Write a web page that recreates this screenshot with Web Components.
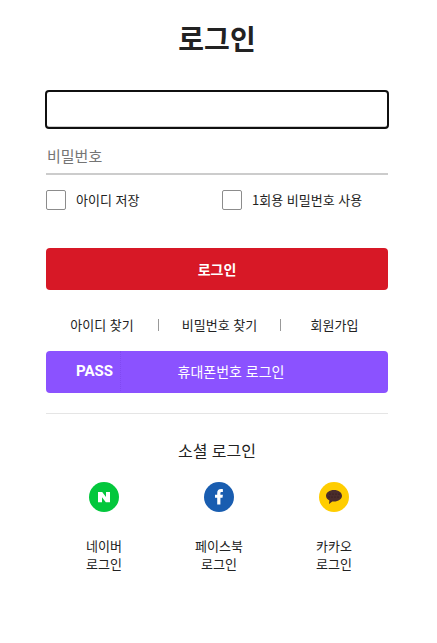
<!DOCTYPE html>
<html lang="ko">
<head>
<meta charset="utf-8">
<meta name="viewport" content="width=device-width, initial-scale=1">
<title>로그인</title>
<style>
  body {
    margin: 0;
    background: #fff;
    color: #222;
    font-family: "Noto Sans CJK KR", sans-serif;
  }
</style>
</head>
<body>
<login-page></login-page>

<script>
class LoginField extends HTMLElement {
  connectedCallback() {
    const label = this.getAttribute("label");
    this.attachShadow({ mode: "open" });
    this.shadowRoot.innerHTML = `
      <style>
        :host {
          display: block;
        }

        input {
          display: block;
          box-sizing: border-box;
          width: 100%;
          height: 37px;
          padding: 0 1px;
          border: 0;
          border-bottom: 2px solid #ccc;
          background: #fff;
          color: inherit;
          font: 15px "Noto Sans CJK KR", sans-serif;
          outline: none;
        }

        input::placeholder {
          color: #757575;
        }

        input:focus,
        :host([active]) input {
          border-radius: 3px;
          outline: 2px solid #101010;
          outline-offset: -1px;
        }
      </style>
      <input
        type="${this.getAttribute("type") || "text"}"
        aria-label="${label}"
        placeholder="${this.hasAttribute("active") ? "" : label}"
      >
    `;
  }
}

class LoginCheck extends HTMLElement {
  connectedCallback() {
    this.attachShadow({ mode: "open" });
    this.shadowRoot.innerHTML = `
      <style>
        :host {
          display: block;
        }

        label {
          display: flex;
          align-items: center;
          gap: 10px;
          font-size: 13px;
          line-height: 20px;
          white-space: nowrap;
        }

        input {
          appearance: none;
          flex: none;
          box-sizing: border-box;
          width: 20px;
          height: 20px;
          margin: 0;
          border: 1px solid #8c8c8c;
          border-radius: 2px;
          background: #fff;
        }

        input:checked {
          background: #d71826;
        }
      </style>
      <label><input type="checkbox"><slot></slot></label>
    `;
  }
}

class LoginButton extends HTMLElement {
  connectedCallback() {
    this.attachShadow({ mode: "open" });
    this.shadowRoot.innerHTML = `
      <style>
        :host {
          display: block;
          --button-color: #d71826;
          --button-weight: 700;
          --button-padding: 0 30px;
        }

        :host([kind="pass"]) {
          --button-color: #8b52ff;
          --button-weight: 400;
          --button-padding: 0 2px 2px 30px;
        }

        button {
          display: grid;
          grid-template-columns: 1fr auto 1fr;
          align-items: center;
          width: 100%;
          height: 42px;
          padding: var(--button-padding);
          border: 0;
          border-radius: 4px;
          background: var(--button-color);
          color: #fff;
          font: var(--button-weight) 14px "Noto Sans CJK KR", sans-serif;
          cursor: pointer;
        }

        .label {
          grid-column: 2;
        }

        ::slotted([slot="brand"]) {
          grid-column: 1;
          justify-self: start;
          padding-right: 7px;
          border-right: 1px dotted #8149f2;
          font: 700 15px/40px Roboto, sans-serif;
        }
      </style>
      <button type="button">
        <slot name="brand"></slot>
        <span class="label"><slot></slot></span>
      </button>
    `;
  }
}

class LoginLinks extends HTMLElement {
  connectedCallback() {
    this.attachShadow({ mode: "open" });
    this.shadowRoot.innerHTML = `
      <style>
        :host {
          display: grid;
          grid-template-columns: 56fr 61fr 54fr;
          align-items: center;
        }

        ::slotted(a) {
          color: inherit;
          font-size: 13px;
          line-height: 12px;
          text-align: center;
          text-decoration: none;
          white-space: nowrap;
        }

        ::slotted(a:not(:first-child)) {
          border-left: 1px solid #999;
        }
      </style>
      <slot></slot>
    `;
  }
}

const icons = {
  naver: `
    <circle cx="15" cy="15" r="15" fill="#03c73c"/>
    <path d="M9 10h4.200l3.800 5V10h4v10.300h-4.200L13 15.300v5H9z" fill="#fff"/>`,
  facebook: `
    <circle cx="15" cy="15" r="15" fill="#195db0"/>
    <path d="M13.200 22.500v-6.700H11v-3h2.200v-1.700c0-2.700 1.300-4 3.900-4 .8 0 1.400.1 1.800.2v2.700h-1.200c-1 0-1.300.5-1.300 1.300v1.500h2.500l-.4 3h-2.100v6.700z" fill="#fff"/>`,
  kakao: `
    <circle cx="15" cy="15" r="15" fill="#ffcd00"/>
    <path d="M15 8c-4.500 0-8 2.600-8 5.800 0 2 1.300 3.700 3.400 4.800L10 22l3.300-2.500 1.700.1c4.500 0 8-2.600 8-5.800S19.500 8 15 8z" fill="#4a2c2c"/>
    <g fill="#2a1616"><circle cx="11" cy="12" r=".6"/><circle cx="14" cy="12" r=".6"/><circle cx="17" cy="12" r=".6"/><circle cx="20" cy="12" r=".6"/><circle cx="10" cy="15" r=".6"/><circle cx="13" cy="15" r=".6"/><circle cx="16" cy="15" r=".6"/><circle cx="19" cy="15" r=".6"/></g>`,
};

class SocialLink extends HTMLElement {
  connectedCallback() {
    this.attachShadow({ mode: "open" });
    this.shadowRoot.innerHTML = `
      <style>
        :host {
          display: block;
          width: 60px;
        }

        a {
          display: flex;
          flex-direction: column;
          align-items: center;
          gap: 25px;
          color: inherit;
          font-size: 13px;
          line-height: 18px;
          text-align: center;
          text-decoration: none;
        }
      </style>
      <a href="#${this.getAttribute("icon")}">
        <svg width="30" height="30" viewBox="0 0 30 30" aria-hidden="true">${icons[this.getAttribute("icon")]}</svg>
        <span><slot></slot></span>
      </a>
    `;
  }
}

class LoginPage extends HTMLElement {
  connectedCallback() {
    this.attachShadow({ mode: "open" });
    this.shadowRoot.innerHTML = `
      <style>
        :host {
          display: block;
          padding: 18px 49px 70px 46px;
        }

        h1 {
          margin: 0 0 33px;
          font-size: 28px;
          font-weight: 700;
          line-height: 40px;
          text-align: center;
        }

        .fields {
          display: grid;
          gap: 10px;
        }

        .checks {
          display: grid;
          grid-template-columns: 1fr 1fr;
          gap: 10px;
          margin: 15px 0 38px;
        }

        login-links {
          margin: 29px 0 20px;
        }

        section {
          margin-top: 20px;
          border-top: 1px solid #e5e5e5;
        }

        h2 {
          margin: 24px 0 20px;
          font-size: 16px;
          font-weight: 400;
          line-height: 24px;
          text-align: center;
        }

        .social {
          display: flex;
          justify-content: space-between;
          padding: 0 24px 0 28px;
        }
      </style>
      <h1>로그인</h1>
      <form>
        <div class="fields">
          <login-field label="아이디" active></login-field>
          <login-field label="비밀번호" type="password"></login-field>
        </div>
        <div class="checks">
          <login-check>아이디 저장</login-check>
          <login-check>1회용 비밀번호 사용</login-check>
        </div>
        <login-button>로그인</login-button>
      </form>
      <login-links>
        <a href="#find-id">아이디 찾기</a>
        <a href="#find-password">비밀번호 찾기</a>
        <a href="#join">회원가입</a>
      </login-links>
      <login-button kind="pass"><span slot="brand">PASS</span>휴대폰번호 로그인</login-button>
      <section>
        <h2>소셜 로그인</h2>
        <div class="social">
          <social-link icon="naver">네이버<br>로그인</social-link>
          <social-link icon="facebook">페이스북<br>로그인</social-link>
          <social-link icon="kakao">카카오<br>로그인</social-link>
        </div>
      </section>
    `;
  }
}

customElements.define("login-field", LoginField);
customElements.define("login-check", LoginCheck);
customElements.define("login-button", LoginButton);
customElements.define("login-links", LoginLinks);
customElements.define("social-link", SocialLink);
customElements.define("login-page", LoginPage);
</script>
</body>
</html>
